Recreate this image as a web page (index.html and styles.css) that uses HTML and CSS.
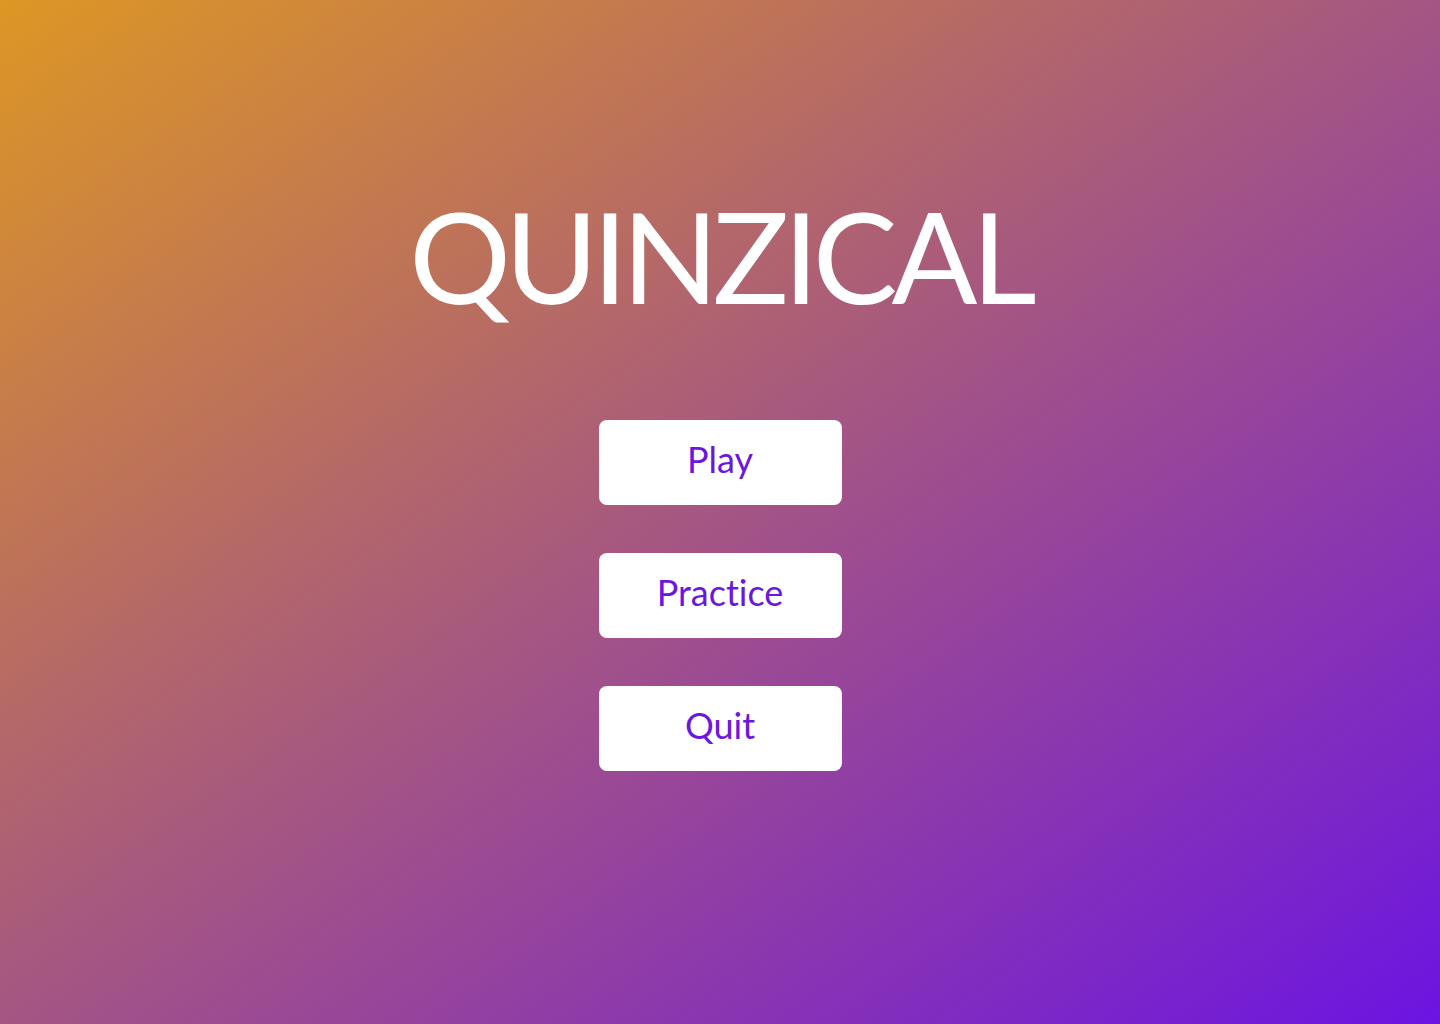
FILE: index.html
```html
<!DOCTYPE html>
<html lang="en">
<head>
<meta charset="utf-8">
<title>Quinzical</title>
<link rel="stylesheet" href="styles.css">
</head>
<body>
<main class="screen">
  <h1 class="title">QUINZICAL</h1>
  <nav class="menu">
    <button class="menu-btn">Play</button>
    <button class="menu-btn">Practice</button>
    <button class="menu-btn">Quit</button>
  </nav>
</main>
</body>
</html>
```
FILE: styles.css
```css
html, body {
  margin: 0;
  padding: 0;
  height: 100%;
}
body {
  background: linear-gradient(to bottom right, #dd9724, #6c14e2);
  font-family: "Lato", "Open Sans", sans-serif;
}
.screen {
  height: 1024px;
  display: flex;
  flex-direction: column;
  align-items: center;
  box-sizing: border-box;
  padding-top: 175px;
}
.title {
  margin: 0;
  color: #fff;
  font-weight: 400;
  font-size: 127px;
  line-height: 160px;
  letter-spacing: -6px;
  font-variant-ligatures: none;
}
.menu {
  margin-top: 85px;
  display: flex;
  flex-direction: column;
  gap: 48px;
}
.menu-btn {
  width: 243px;
  height: 85px;
  border: none;
  border-radius: 8px;
  background: #fff;
  color: #6b17e0;
  font-family: "Lato", "Open Sans", sans-serif;
  font-size: 36px;
  padding: 0 0 8px;
  font-variant-ligatures: none;
}
```
